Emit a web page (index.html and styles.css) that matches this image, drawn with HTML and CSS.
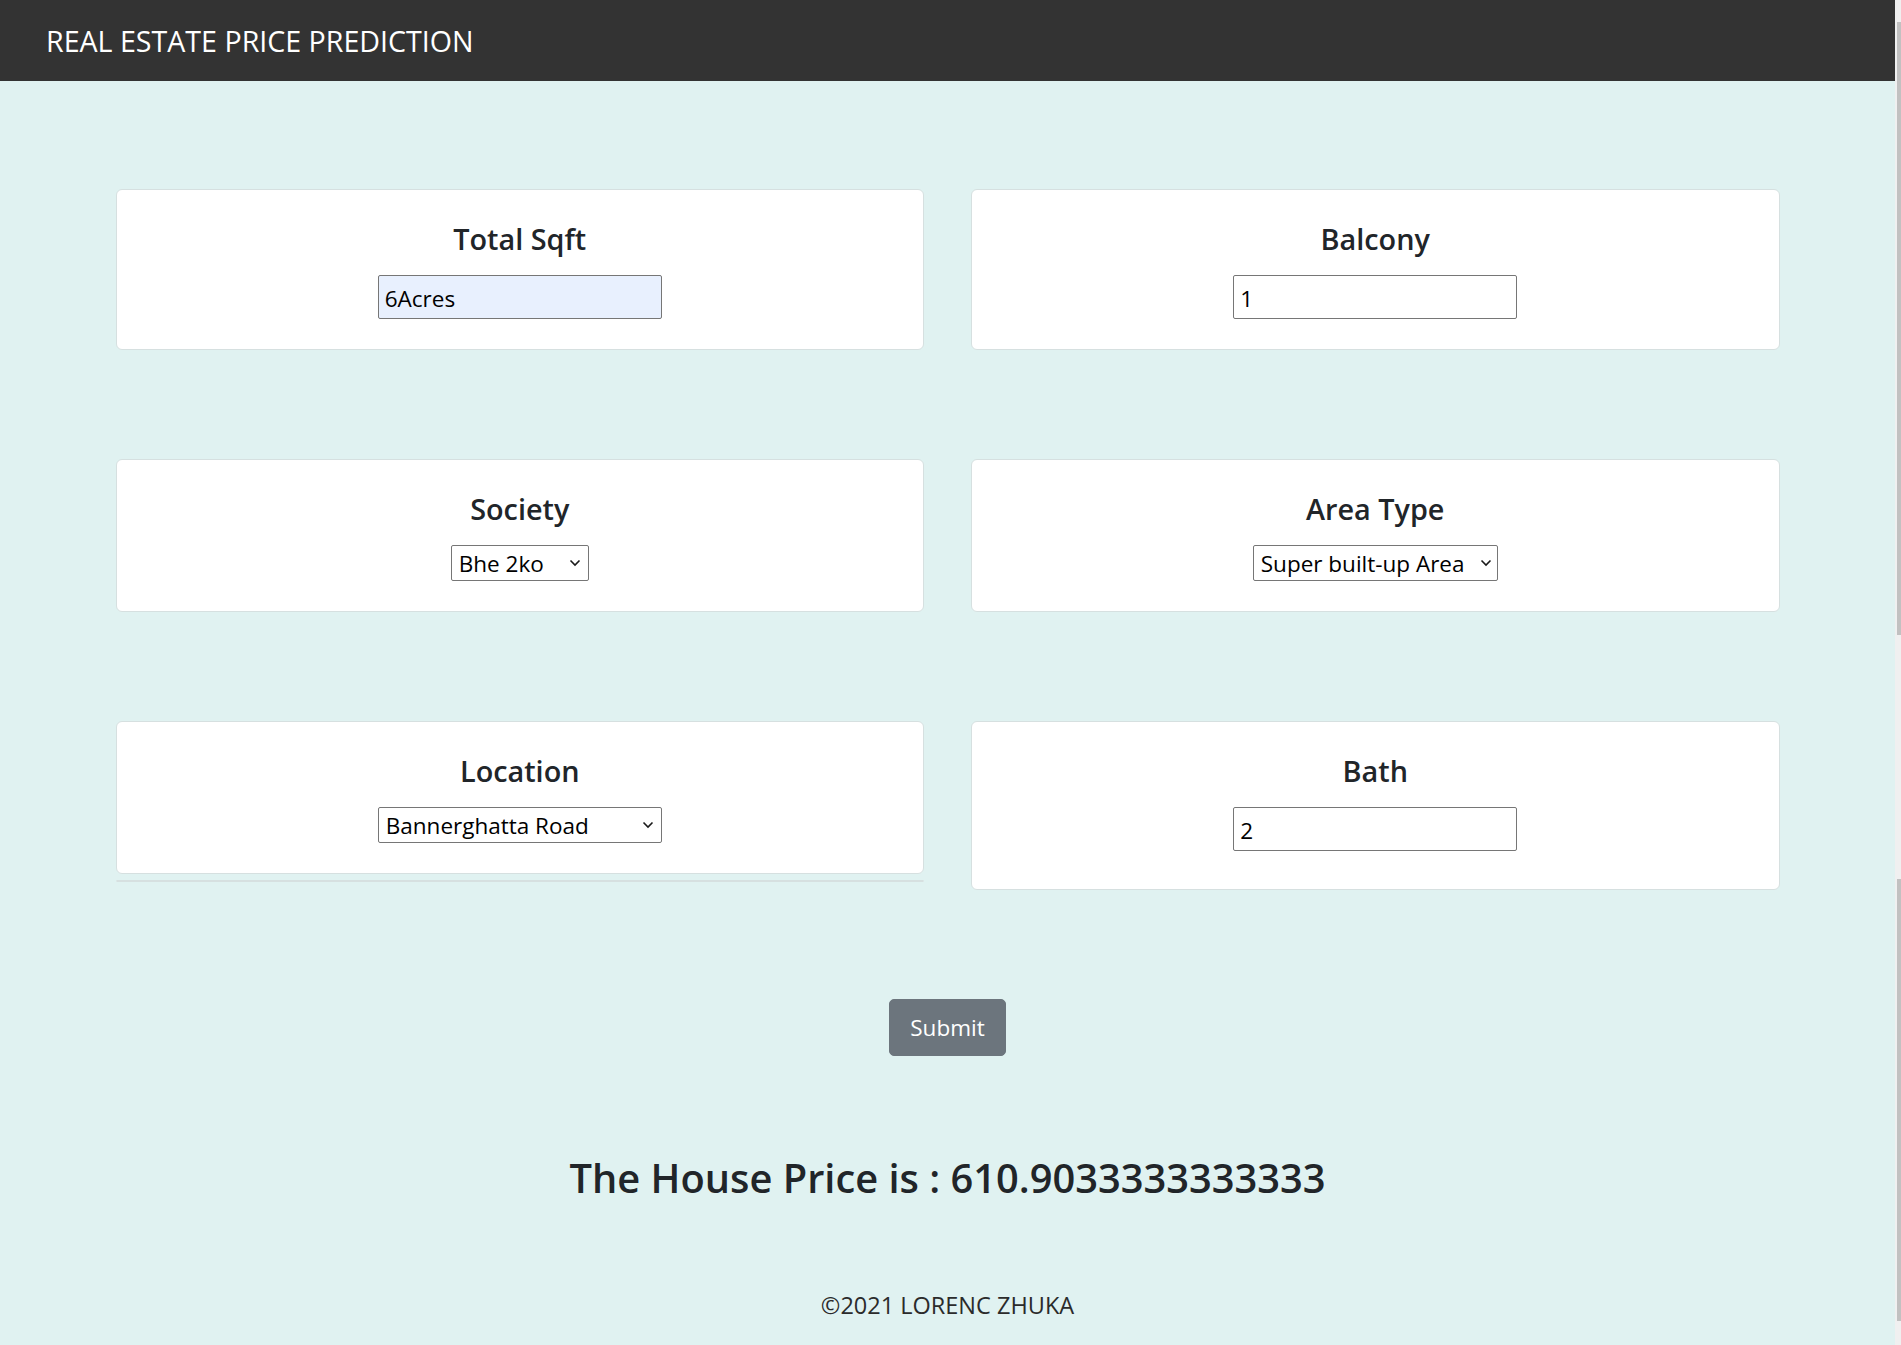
FILE: index.html
```html
<!DOCTYPE html>
<html lang="en">
<head>
<meta charset="utf-8">
<title>Real Estate Price Prediction</title>
<link rel="stylesheet" href="styles.css">
</head>
<body>
<div class="page">
  <div class="main">
    <header class="topbar">
      <span class="brand">REAL ESTATE PRICE PREDICTION</span>
    </header>

    <form class="form">
      <div class="grid">
        <div class="card">
          <h4 class="card-title">Total Sqft</h4>
          <input class="field field-autofill" type="text" value="6Acres">
        </div>
        <div class="card">
          <h4 class="card-title">Balcony</h4>
          <input class="field" type="text" value="1">
        </div>

        <div class="card">
          <h4 class="card-title">Society</h4>
          <div class="select-wrap select-society">
            <select class="select"><option>Bhe 2ko</option></select>
            <svg class="chevron" viewBox="0 0 12 8" width="12" height="8"><path d="M1.5 1.5 L6 6 L10.5 1.5" fill="none" stroke="#1a1a1a" stroke-width="1.6"/></svg>
          </div>
        </div>
        <div class="card">
          <h4 class="card-title">Area Type</h4>
          <div class="select-wrap select-area">
            <select class="select"><option>Super built-up Area</option></select>
            <svg class="chevron chevron-tight" viewBox="0 0 12 8" width="12" height="8"><path d="M1.5 1.5 L6 6 L10.5 1.5" fill="none" stroke="#1a1a1a" stroke-width="1.6"/></svg>
          </div>
        </div>

        <div class="cell-stack">
          <div class="card">
            <h4 class="card-title">Location</h4>
            <div class="select-wrap select-location">
              <select class="select"><option>Bannerghatta Road</option></select>
              <svg class="chevron" viewBox="0 0 12 8" width="12" height="8"><path d="M1.5 1.5 L6 6 L10.5 1.5" fill="none" stroke="#1a1a1a" stroke-width="1.6"/></svg>
            </div>
          </div>
          <div class="card-ghost"></div>
        </div>
        <div class="card card-tall">
          <h4 class="card-title">Bath</h4>
          <input class="field" type="text" value="2">
        </div>
      </div>

      <div class="actions">
        <button class="btn" type="button">Submit</button>
      </div>
    </form>

    <h2 class="result">The House Price is : 610.9033333333333</h2>

    <footer class="footer">©2021 LORENC ZHUKA</footer>
  </div>

  <div class="scrollbar">
    <div class="thumb thumb-top"></div>
    <div class="thumb thumb-bottom"></div>
  </div>
</div>
</body>
</html>
```

FILE: styles.css
```css
* {
  box-sizing: border-box;
}

html, body {
  margin: 0;
  padding: 0;
}

body {
  background: #e0f2f1;
  font-family: "Open Sans", sans-serif;
  color: #212529;
  overflow: hidden;
}

.page {
  display: flex;
  min-height: 100vh;
}

.main {
  flex: 1;
  min-width: 0;
}

/* header */
.topbar {
  height: 81px;
  background: #333333;
  display: flex;
  align-items: center;
  padding-left: 46px;
}

.brand {
  color: #ffffff;
  font-size: 28.6px;
  font-weight: 400;
  line-height: 34px;
}

/* form */
.form {
  padding-top: 108px;
}

.grid {
  width: 1664px;
  margin: 0 auto;
  display: grid;
  grid-template-columns: 1fr 1fr;
  column-gap: 47px;
  row-gap: 109px;
  align-items: start;
}

.card {
  background: #ffffff;
  border: 1px solid #d6e0e0;
  border-radius: 6px;
  padding: 32px 20px 30px;
  text-align: center;
}

.card-tall {
  padding-bottom: 38px;
}

.cell-stack {
  display: flex;
  flex-direction: column;
}

.card-ghost {
  margin-top: 6px;
  height: 2px;
  border: 1px solid #d6e0e0;
  border-radius: 6px;
  background: #ffffff;
}

.card-title {
  margin: 0 0 19px;
  font-size: 28.8px;
  line-height: 34px;
  font-weight: 600;
  color: #212529;
}

.field {
  display: block;
  margin: 0 auto;
  width: 284px;
  height: 44px;
  padding: 2px 6px 0;
  border: 1px solid #767676;
  border-radius: 2px;
  background: #ffffff;
  font-family: "Open Sans", sans-serif;
  font-size: 22.5px;
  color: #000000;
  outline: none;
}

.field-autofill {
  background: #e8f0fe;
}

.select-wrap {
  position: relative;
  display: block;
  margin: 0 auto;
  height: 36px;
}

.select-society { width: 138px; }
.select-area { width: 245px; }
.select-location { width: 284px; }

.select {
  -webkit-appearance: none;
  appearance: none;
  display: block;
  width: 100%;
  height: 36px;
  padding: 0 22px 0 7px;
  border: 1px solid #767676;
  border-radius: 2px;
  background: #ffffff;
  font-family: "Open Sans", sans-serif;
  font-size: 22.5px;
  color: #000000;
  outline: none;
}

.chevron {
  position: absolute;
  right: 8px;
  top: 50%;
  transform: translateY(-50%);
  pointer-events: none;
}

.chevron-tight {
  right: 6px;
}

.actions {
  margin-top: 109px;
  display: flex;
  justify-content: center;
}

.btn {
  height: 57px;
  padding: 0 20px;
  border: 1px solid #6c757d;
  border-radius: 5px;
  background: #6c757d;
  color: #ffffff;
  font-family: "Open Sans", sans-serif;
  font-size: 22.5px;
  line-height: 30px;
  cursor: pointer;
}

.result {
  margin: 98px 0 0;
  text-align: center;
  font-size: 39.8px;
  line-height: 47px;
  font-weight: 600;
  color: #212529;
}

.footer {
  margin-top: 88px;
  text-align: center;
  font-size: 23.5px;
  line-height: 32px;
  font-weight: 400;
  color: #2b2b2b;
}

/* scrollbar strip */
.scrollbar {
  width: 6px;
  flex: none;
  background: #f0f0f0;
  display: flex;
  flex-direction: column;
  align-items: flex-end;
}

.thumb {
  width: 4px;
  background: #c1c1c1;
}

.thumb-top {
  margin-top: 22px;
  height: 613px;
}

.thumb-bottom {
  margin-top: 244px;
  height: 442px;
}
```
